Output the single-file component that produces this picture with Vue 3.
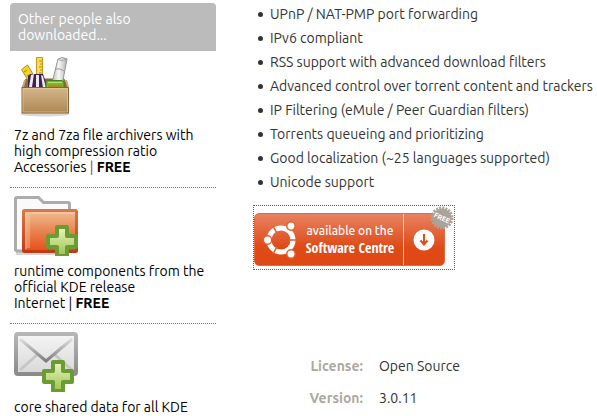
<script setup>
const features = [
  'UPnP / NAT-PMP port forwarding',
  'IPv6 compliant',
  'RSS support with advanced download filters',
  'Advanced control over torrent content and trackers',
  'IP Filtering (eMule / Peer Guardian filters)',
  'Torrents queueing and prioritizing',
  'Good localization (~25 languages supported)',
  'Unicode support',
]
const details = [
  { label: 'License:', value: 'Open Source' },
  { label: 'Version:', value: '3.0.11' },
]
</script>

<template>
  <div class="page">
    <aside class="related">
      <h2>Other people also downloaded...</h2>
      <ul class="apps">
        <li>
          <svg class="icon box" viewBox="0 0 64 64" aria-hidden="true">
            <defs>
              <linearGradient id="card" x1="0" y1="0" x2="0" y2="1">
                <stop offset="0" stop-color="#d4b78c" />
                <stop offset="1" stop-color="#ad8652" />
              </linearGradient>
              <linearGradient id="tube" x1="0" y1="0" x2="1" y2="0">
                <stop offset="0" stop-color="#b9b9b9" />
                <stop offset=".45" stop-color="#f7f7f7" />
                <stop offset="1" stop-color="#b4b4b4" />
              </linearGradient>
            </defs>
            <ellipse cx="31" cy="58" rx="25" ry="2.5" fill="#d9d9d9" />
            <path d="M12 23h38l4 9H8z" fill="#8e6b3e" stroke="#86673f" />
            <path d="M7.500 13.500l6-4.500 11 18-7 3z" fill="#f1d227" stroke="#b4920e" />
            <path d="M10 16l3-2M13 20l2-1M15 23l3-2" stroke="#a78810" />
            <path d="M22.500 1.500h6v25h-6z" fill="#f6dd5b" stroke="#c29c15" />
            <path d="M25 5h3M26 8h2M25 11h3M26 14h2M25 17h3" stroke="#b38d12" />
            <path d="M44 3q4-3 9 0l-5 26-10-2z" fill="url(#tube)" stroke="#969696" />
            <path d="M41.500 13q4-1 9 2" fill="none" stroke="#969696" />
            <path d="M44 3q3 3 9 0" fill="none" stroke="#a5a5a5" />
            <path d="M14 20l2-2h13l5 14H14z" fill="#3e2250" />
            <path d="M17 19l3-1-2 13h-3zM22 19h3v13h-3zM27 19l2 1 3 12h-3z" fill="#eee9f0" />
            <path d="M32 26l2-1.500h14l2 2v6H32z" fill="#7db52f" stroke="#47810f" />
            <path d="M34 26.500h14" stroke="#b7dc78" />
            <path d="M34 29h14v2H34z" fill="#b18a1d" />
            <path d="M11 24L9 31M52 24l2 7" stroke="#c6a779" stroke-width="2" />
            <path d="M8 31.500h46.500V57H8z" fill="url(#card)" stroke="#866238" />
            <path d="M9 32.500h44.500V56H9z" fill="none" stroke="#e2cda9" opacity=".6" />
          </svg>
          <p>7z and 7za file archivers with high compression ratio</p>
          <p>Accessories <span class="bar">|</span> <strong>FREE</strong></p>
        </li>
        <li>
          <svg class="icon" viewBox="0 0 64 60" aria-hidden="true">
            <defs>
              <linearGradient id="folder" x1="0" y1="0" x2="0" y2="1">
                <stop offset="0" stop-color="#f0bf94" />
                <stop offset=".5" stop-color="#e98450" />
                <stop offset="1" stop-color="#e54d18" />
              </linearGradient>
              <linearGradient id="rim" x1="0" y1="0" x2="0" y2="1">
                <stop offset="0" stop-color="#d9774a" />
                <stop offset="1" stop-color="#c03a14" />
              </linearGradient>
              <linearGradient id="plus" x1="0" y1="0" x2="0" y2="1">
                <stop offset="0" stop-color="#e9f4c1" />
                <stop offset="1" stop-color="#9dc44d" />
              </linearGradient>
            </defs>
            <path d="M2 57h46" stroke="#d6d6d6" stroke-width="4" />
            <path d="M1.500 54V3q0-1.500 2-1.500h21l5 5H54q1.500 0 1.500 1.500v47H3z" fill="#fafafa" stroke="#acacac" stroke-width="3" />
            <rect x="9.500" y="14.500" width="53" height="41" rx="1" fill="url(#folder)" stroke="url(#rim)" stroke-width="3" />
            <path d="M12 53V17h49" fill="none" stroke="#f8d6b4" stroke-width="2" opacity=".45" />
            <path d="M14.500 18v34" stroke="#f8c9a6" stroke-width="3" opacity=".4" />
            <path d="M43 31h10v9h9v11h-9v9H43v-9h-9V40h9z" fill="url(#plus)" stroke="#6b9c34" stroke-width="4" stroke-linejoin="round" />
          </svg>
          <p>runtime components from the official KDE release</p>
          <p>Internet | <strong>FREE</strong></p>
        </li>
        <li>
          <svg class="icon" viewBox="0 0 64 60" aria-hidden="true">
            <defs>
              <linearGradient id="paper" x1="0" y1="0" x2="0" y2="1">
                <stop offset="0" stop-color="#f5f5f5" />
                <stop offset="1" stop-color="#d8d8d8" />
              </linearGradient>
              <linearGradient id="edge" x1="0" y1="0" x2="0" y2="1">
                <stop offset="0" stop-color="#b6b6b6" />
                <stop offset="1" stop-color="#8b8b8b" />
              </linearGradient>
              <linearGradient id="flap" x1="0" y1="0" x2="0" y2="1">
                <stop offset="0" stop-color="#dedede" />
                <stop offset="1" stop-color="#7c7c7c" />
              </linearGradient>
            </defs>
            <rect x="2" y="2" width="60" height="40" rx="2" fill="url(#paper)" stroke="url(#edge)" stroke-width="4" />
            <path d="M6 38l18-16M58 38L40 22" stroke="#c6c6c6" stroke-width="3" />
            <path d="M6 7l26 22L58 7" fill="none" stroke="url(#flap)" stroke-width="3" />
            <path d="M39 30h10v9h9v11h-9v9H39v-9h-9V39h9z" fill="url(#plus)" stroke="#6b9c34" stroke-width="4" stroke-linejoin="round" />
          </svg>
          <p>core shared data for all KDE</p>
        </li>
      </ul>
    </aside>

    <main>
      <ul class="features">
        <li v-for="feature in features" :key="feature">{{ feature }}</li>
      </ul>

      <a class="store" href="#software-centre">
        <span class="banner">
          <svg class="logo" viewBox="0 0 34 38" aria-hidden="true">
            <circle cx="18" cy="19" r="12" fill="none" stroke="#fff" stroke-width="5" />
            <path d="M26 19h8M14 12.100l-4-6.900M14 25.900l-4 6.900" stroke="#e2602f" stroke-width="1.500" />
            <g fill="#fff" stroke="#e2602f" stroke-width="1.500">
              <circle cx="4.500" cy="19" r="4.200" />
              <circle cx="28" cy="5" r="4.200" />
              <circle cx="28" cy="33" r="4.200" />
            </g>
          </svg>
          <span class="pitch">
            <span class="small">available on the</span>
            <span class="large">Software Centre</span>
          </span>
          <span class="get">
            <svg viewBox="0 0 22 22" aria-hidden="true">
              <circle cx="11" cy="11" r="10.500" fill="#fff" />
              <path d="M11 5v10M7.500 11.500l3.500 4 3.500-4" fill="none" stroke="#df4d1c" stroke-width="2" />
            </svg>
          </span>
        </span>
        <svg class="seal" viewBox="0 0 24 24" aria-hidden="true">
          <circle cx="12" cy="12" r="9.500" fill="#aaa39b" />
          <circle cx="12" cy="12" r="10" fill="none" stroke="#aaa39b" stroke-width="3" stroke-dasharray="2 1.140" />
          <text x="12" y="14.500" text-anchor="middle" transform="rotate(24 12 12)">FREE</text>
        </svg>
      </a>

      <dl>
        <template v-for="item in details" :key="item.label">
          <dt>{{ item.label }}</dt>
          <dd>{{ item.value }}</dd>
        </template>
      </dl>
    </main>
  </div>
</template>

<style>
body {
  margin: 0;
  background: #fff;
}
</style>

<style scoped>
.page {
  display: grid;
  grid-template-columns: 206px minmax(0, 1fr);
  column-gap: 37px;
  padding-left: 10px;
  font-family: Ubuntu, "Noto Sans", sans-serif;
  font-size: 14px;
  color: #333;
}
h2,
p,
ul,
dl,
dd {
  margin: 0;
  padding: 0;
}
.related {
  padding-top: 3px;
  color: #000;
}
h2 {
  padding: 8px 60px 8px 8px;
  border-radius: 4px 4px 0 0;
  background: #bbb;
  color: #fff;
  font-size: 14px;
  font-weight: 400;
  line-height: 16px;
}
.apps {
  list-style: none;
}
.apps li {
  padding: 8px 4px 12px;
  border-top: 1px dotted #777;
  line-height: 16px;
}
.apps li:first-child {
  padding-top: 5px;
  border-top: 0;
}
.apps li:last-child {
  padding-bottom: 0;
}
.icon {
  display: block;
  width: 64px;
  height: 60px;
  margin-bottom: 7px;
}
.box {
  height: 64px;
}
.bar {
  color: #a33a12;
}
.features {
  list-style: none;
  padding: 2px 0 0 5px;
  line-height: 24px;
}
.features li {
  display: flex;
  align-items: center;
  gap: 7px;
  white-space: nowrap;
}
.features li::before {
  content: "";
  width: 5px;
  height: 5px;
  border-radius: 50%;
  background: #333;
}
.store {
  position: relative;
  display: block;
  box-sizing: border-box;
  width: 202px;
  margin-top: 11px;
  padding: 7px 9px 3px 0;
  border: 1px dotted #c8400f;
  color: #fff;
  text-decoration: none;
}
.banner {
  display: flex;
  align-items: center;
  box-sizing: border-box;
  height: 53px;
  padding-left: 8px;
  border: 1px solid #e26a41;
  border-radius: 5px;
  background: linear-gradient(#e88262, #df4a17 65%, #dd4814);
}
.logo {
  width: 34px;
  height: 38px;
}
.pitch {
  display: flex;
  flex: 1;
  flex-direction: column;
  align-items: center;
  white-space: nowrap;
}
.small {
  font-size: 12px;
  font-weight: 500;
  line-height: 16px;
}
.large {
  font-family: "Ubuntu Condensed", "Open Sans Condensed", Ubuntu, sans-serif;
  font-size: 14px;
  font-weight: 700;
  line-height: 18px;
}
.get {
  display: flex;
  align-self: stretch;
  align-items: center;
  justify-content: center;
  width: 40px;
  border-left: 1px solid #f6cfc0;
}
.get svg {
  width: 22px;
  height: 22px;
}
.seal {
  position: absolute;
  top: 0;
  right: 0;
  width: 24px;
  height: 24px;
}
.seal text {
  fill: #fff;
  font-size: 7px;
  font-weight: 700;
}
dl {
  display: grid;
  grid-template-columns: 110px 1fr;
  gap: 8px 16px;
  margin-top: 84px;
  line-height: 24px;
}
dt {
  color: #aea79f;
  font-weight: 700;
  text-align: right;
}
</style>
